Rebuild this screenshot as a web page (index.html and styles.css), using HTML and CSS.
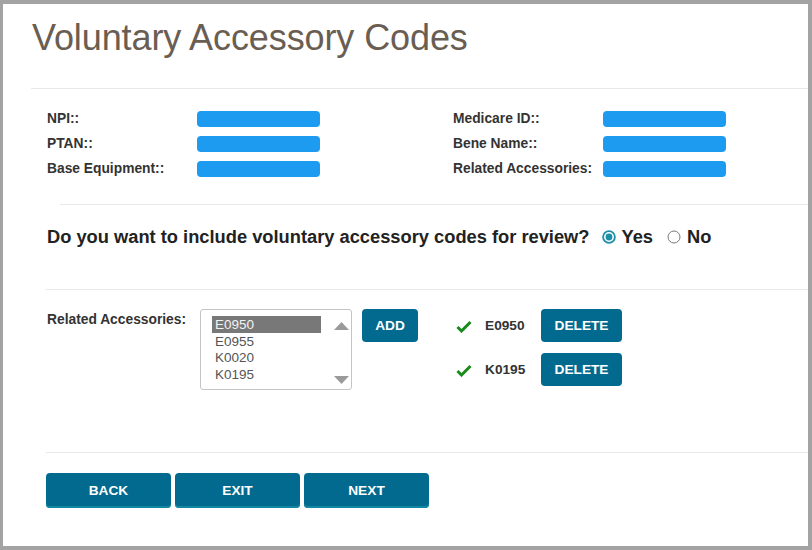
FILE: index.html
```html
<!DOCTYPE html>
<html lang="en">
<head>
<meta charset="utf-8">
<title>Voluntary Accessory Codes</title>
<link rel="stylesheet" href="styles.css">
</head>
<body>
<div class="frame">
  <h1 class="title">Voluntary Accessory Codes</h1>
  <div class="rule rule-a"></div>

  <div class="info">
    <div class="info-col">
      <div class="info-row"><span class="lbl">NPI::</span><span class="bar"></span></div>
      <div class="info-row"><span class="lbl">PTAN::</span><span class="bar"></span></div>
      <div class="info-row"><span class="lbl">Base Equipment::</span><span class="bar"></span></div>
    </div>
    <div class="info-col">
      <div class="info-row"><span class="lbl">Medicare ID::</span><span class="bar"></span></div>
      <div class="info-row"><span class="lbl">Bene Name::</span><span class="bar"></span></div>
      <div class="info-row"><span class="lbl">Related Accessories:</span><span class="bar"></span></div>
    </div>
  </div>

  <div class="rule rule-b"></div>

  <div class="question">
    <span class="q-text">Do you want to include voluntary accessory codes for review?</span>
    <span class="radio">
      <svg width="14" height="14" viewBox="0 0 14 14"><circle cx="7" cy="7" r="5.9" fill="none" stroke="#1b8ea8" stroke-width="1.8"/><circle cx="7" cy="7" r="3.4" fill="#1b8ea8"/></svg>
      <span class="r-lbl">Yes</span>
    </span>
    <span class="radio">
      <svg width="14" height="14" viewBox="0 0 14 14"><circle cx="7" cy="7" r="6" fill="#fff" stroke="#7a7a7a" stroke-width="1"/></svg>
      <span class="r-lbl">No</span>
    </span>
  </div>

  <div class="rule rule-c"></div>

  <div class="accessories">
    <span class="lbl acc-lbl">Related Accessories:</span>
    <div class="listbox">
      <div class="list-items">
        <div class="item selected">E0950</div>
        <div class="item">E0955</div>
        <div class="item">K0020</div>
        <div class="item">K0195</div>
      </div>
      <div class="list-arrows">
        <svg width="15" height="8" viewBox="0 0 15 8"><path d="M7.5 0 L15 8 L0 8 Z" fill="#9a9a9a"/></svg>
        <svg width="15" height="8" viewBox="0 0 15 8"><path d="M0 0 L15 0 L7.5 8 Z" fill="#9a9a9a"/></svg>
      </div>
    </div>
    <button class="btn btn-add">ADD</button>
    <div class="chosen">
      <div class="chosen-row">
        <svg class="check" width="16" height="13" viewBox="0 0 16 13"><path d="M1.5 7 L5.5 11 L14.5 2" fill="none" stroke="#1a8a1a" stroke-width="3" stroke-linejoin="miter"/></svg>
        <span class="code">E0950</span>
        <button class="btn btn-del">DELETE</button>
      </div>
      <div class="chosen-row">
        <svg class="check" width="16" height="13" viewBox="0 0 16 13"><path d="M1.5 7 L5.5 11 L14.5 2" fill="none" stroke="#1a8a1a" stroke-width="3" stroke-linejoin="miter"/></svg>
        <span class="code">K0195</span>
        <button class="btn btn-del">DELETE</button>
      </div>
    </div>
  </div>

  <div class="rule rule-d"></div>

  <div class="nav">
    <button class="btn btn-nav">BACK</button>
    <button class="btn btn-nav">EXIT</button>
    <button class="btn btn-nav">NEXT</button>
  </div>
</div>
</body>
</html>
```

FILE: styles.css
```css
* { box-sizing: border-box; }

html, body {
  margin: 0;
  padding: 0;
  background: #ffffff;
}

body {
  font-family: "Liberation Sans", Arial, sans-serif;
  color: #333333;
}

.frame {
  width: 812px;
  height: 550px;
  border-style: solid;
  border-color: #a3a3a3;
  border-width: 4px 4px 4px 3px;
  background: #ffffff;
  overflow: hidden;
}

.title {
  margin: 14px 0 0 29px;
  font-size: 36px;
  line-height: 40px;
  font-weight: normal;
  color: #6a5d52;
  letter-spacing: -0.1px;
}

.rule {
  height: 1px;
  background: #e9e9e9;
}
.rule-a { margin: 30px 0 0 28px; }
.rule-b { margin: 23px 0 0 57px; }
.rule-c { margin: 40px 0 0 43px; }
.rule-d { margin: 62px 0 0 43px; }

.info {
  display: flex;
  padding: 17px 0 0 44px;
}
.info-col {
  width: 406px;
  flex-shrink: 0;
  display: flex;
  flex-direction: column;
}
.info-row {
  height: 25px;
  display: flex;
  align-items: center;
}
.lbl {
  font-size: 13.8px;
  font-weight: bold;
  color: #333333;
}
.info-row .lbl {
  width: 150px;
  flex-shrink: 0;
}
.bar {
  width: 123px;
  height: 16px;
  flex-shrink: 0;
  border-radius: 4px;
  background: #1d9bf0;
}

.question {
  margin-top: 20px;
  height: 24px;
  display: flex;
  align-items: center;
  padding-left: 44px;
  font-weight: bold;
  color: #222222;
  white-space: nowrap;
}
.q-text {
  font-size: 18.3px;
}
.radio {
  display: flex;
  align-items: center;
  margin-left: 12px;
}
.radio + .radio { margin-left: 14px; }
.radio svg { display: block; }
.r-lbl {
  margin-left: 6px;
  font-size: 18.3px;
}

.accessories {
  padding: 19px 0 0 44px;
  display: flex;
  align-items: flex-start;
}
.acc-lbl {
  width: 153px;
  margin-top: 3px;
}

.listbox {
  width: 152px;
  height: 81px;
  border: 1px solid #c4c4c4;
  border-radius: 3px;
  display: flex;
  padding: 6px 0 0 11px;
}
.list-items {
  width: 109px;
}
.item {
  height: 16.7px;
  line-height: 17px;
  font-size: 13.5px;
  color: #555555;
  padding-left: 3px;
}
.item.selected {
  background: #787878;
  color: #f2f2f2;
}
.list-arrows {
  margin-left: 13px;
  height: 68px;
  padding-top: 6px;
  display: flex;
  flex-direction: column;
  justify-content: space-between;
}
.list-arrows svg { display: block; }

.btn {
  border: none;
  border-radius: 4px;
  background: #016a8e;
  color: #ffffff;
  font-family: "Liberation Sans", Arial, sans-serif;
  font-weight: bold;
  font-size: 13.7px;
  padding: 0;
  cursor: pointer;
}
.btn-add {
  width: 56px;
  height: 33px;
  margin-left: 10px;
}

.chosen {
  margin-left: 38px;
  display: flex;
  flex-direction: column;
  gap: 11px;
}
.chosen-row {
  height: 33px;
  display: flex;
  align-items: center;
}
.check {
  display: block;
  margin-top: 1px;
}
.code {
  margin-left: 13px;
  width: 56px;
  font-size: 13.7px;
  font-weight: bold;
  color: #333333;
}
.btn-del {
  width: 81px;
  height: 33px;
}

.nav {
  margin-top: 20px;
  padding-left: 43px;
  display: flex;
  gap: 4px;
}
.btn-nav {
  width: 125px;
  height: 35px;
  box-shadow: inset 0 -2px 0 #1388a4;
}
```
